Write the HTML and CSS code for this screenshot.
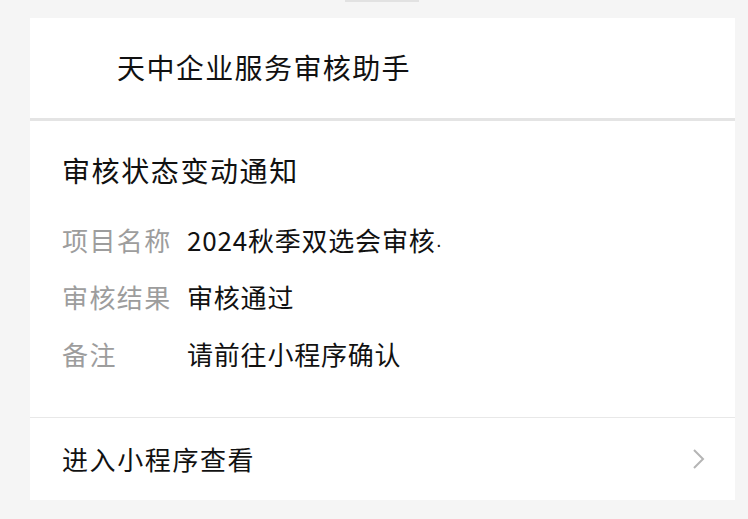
FILE: index.html
```html
<!DOCTYPE html>
<html lang="zh-CN">
<head>
<meta charset="utf-8">
<title>审核状态变动通知</title>
<link rel="stylesheet" href="styles.css">
</head>
<body>
<div class="page">
  <div class="top-tab"></div>
  <div class="card">
    <div class="card-header">
      <span class="app-name">天中企业服务审核助手</span>
    </div>
    <div class="card-body">
      <div class="notice-title">审核状态变动通知</div>
      <div class="fields">
        <div class="field-label">项目名称</div>
        <div class="field-value">2024秋季双选会审核<span class="trunc">·</span></div>
        <div class="field-label">审核结果</div>
        <div class="field-value">审核通过</div>
        <div class="field-label">备注</div>
        <div class="field-value">请前往小程序确认</div>
      </div>
    </div>
    <div class="card-footer">
      <span class="footer-text">进入小程序查看</span>
      <svg class="chevron" width="14" height="22" viewBox="0 0 14 22" aria-hidden="true">
        <polyline points="2,2 11,11 2,20" fill="none" stroke="#b5b5b5" stroke-width="2"/>
      </svg>
    </div>
  </div>
</div>
</body>
</html>
```

FILE: styles.css
```css
* {
  box-sizing: border-box;
}

html, body {
  margin: 0;
  padding: 0;
  background: #f5f5f5;
}

body {
  font-family: "Noto Sans CJK SC", "Noto Sans", sans-serif;
  color: #111111;
}

.page {
  width: 748px;
  height: 519px;
  padding: 18px 13px 0 30px;
  position: relative;
  overflow: hidden;
}

.top-tab {
  position: absolute;
  left: 345px;
  top: 0;
  width: 74px;
  height: 2px;
  background: #e2e2e2;
}

.card {
  width: 705px;
  background: #ffffff;
}

.card-header {
  height: 103px;
  padding-left: 87px;
  display: flex;
  align-items: center;
  padding-bottom: 3px;
  border-bottom: 3px solid #e4e4e4;
}

.app-name {
  font-size: 28px;
  line-height: 40px;
  letter-spacing: 1.4px;
}

.card-body {
  padding: 29px 32px 43px 32px;
  border-bottom: 1px solid #e8e8e8;
}

.notice-title {
  font-size: 28px;
  line-height: 40px;
  letter-spacing: 1.6px;
}

.fields {
  margin-top: 30px;
  display: grid;
  grid-template-columns: 125px 1fr;
  grid-auto-rows: 40px;
  row-gap: 17px;
  font-size: 26px;
  line-height: 40px;
}

.field-label {
  color: #9d9d9d;
  letter-spacing: 1.4px;
}

.field-value {
  color: #111111;
  letter-spacing: 0.8px;
}

.trunc {
  font-family: "Liberation Sans", sans-serif;
  font-size: 20px;
  line-height: 1;
  letter-spacing: 0;
}

.card-footer {
  height: 82px;
  padding: 0 29px 0 32px;
  display: flex;
  align-items: center;
  justify-content: space-between;
}

.footer-text {
  font-size: 26px;
  line-height: 40px;
  letter-spacing: 1.6px;
}

.chevron {
  display: block;
}
```
